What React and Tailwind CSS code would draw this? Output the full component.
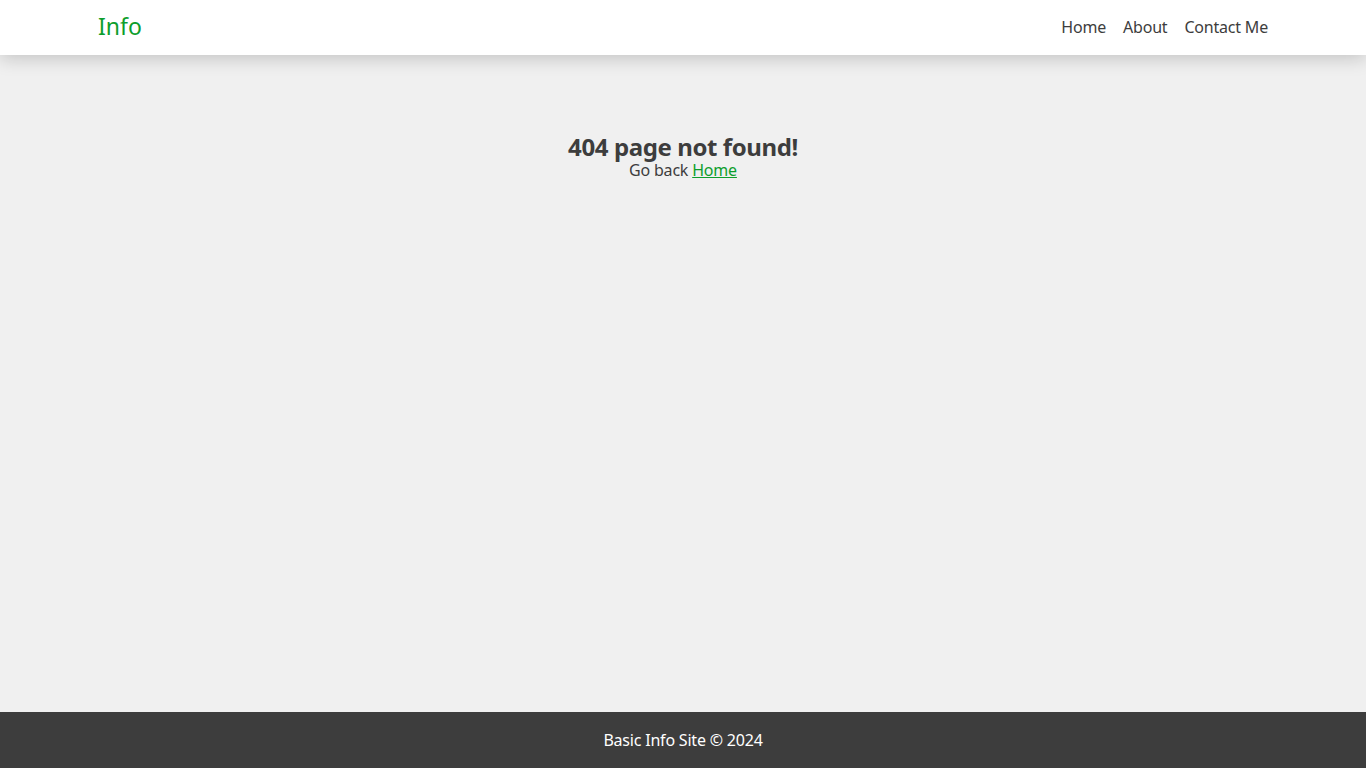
import React from 'react';

const App = () => {
  return (
    <div
      className="min-h-screen flex flex-col bg-[#f0f0f0] text-[#3d3d3d]"
      style={{ fontFamily: '"Noto Sans", "Open Sans", sans-serif' }}
    >
      <header className="relative z-10 h-[55px] bg-white shadow-[0_4px_18px_rgba(0,0,0,0.18)]">
        <div className="mx-auto w-[1170px] h-full flex items-center justify-between pb-[2px]">
          <a href="#" className="text-[23px] text-[#0d9e2c] leading-none">Info</a>
          <nav className="flex items-center gap-[17px] text-[16px] tracking-[-0.2px]">
            <a href="#">Home</a>
            <a href="#">About</a>
            <a href="#">Contact Me</a>
          </nav>
        </div>
      </header>

      <main className="flex-1 flex flex-col items-center pt-[80px]">
        <h1 className="text-[24px] font-bold leading-[24px] tracking-[-0.4px]">404 page not found!</h1>
        <p className="text-[16px] leading-[22px] tracking-[-0.2px]">
          Go back <a href="#" className="text-[#0d9e2c] underline">Home</a>
        </p>
      </main>

      <footer className="h-[56px] bg-[#3d3d3d] text-white flex items-center justify-center text-[16px] tracking-[-0.2px]">
        Basic Info Site © 2024
      </footer>
    </div>
  );
};

export default App;
